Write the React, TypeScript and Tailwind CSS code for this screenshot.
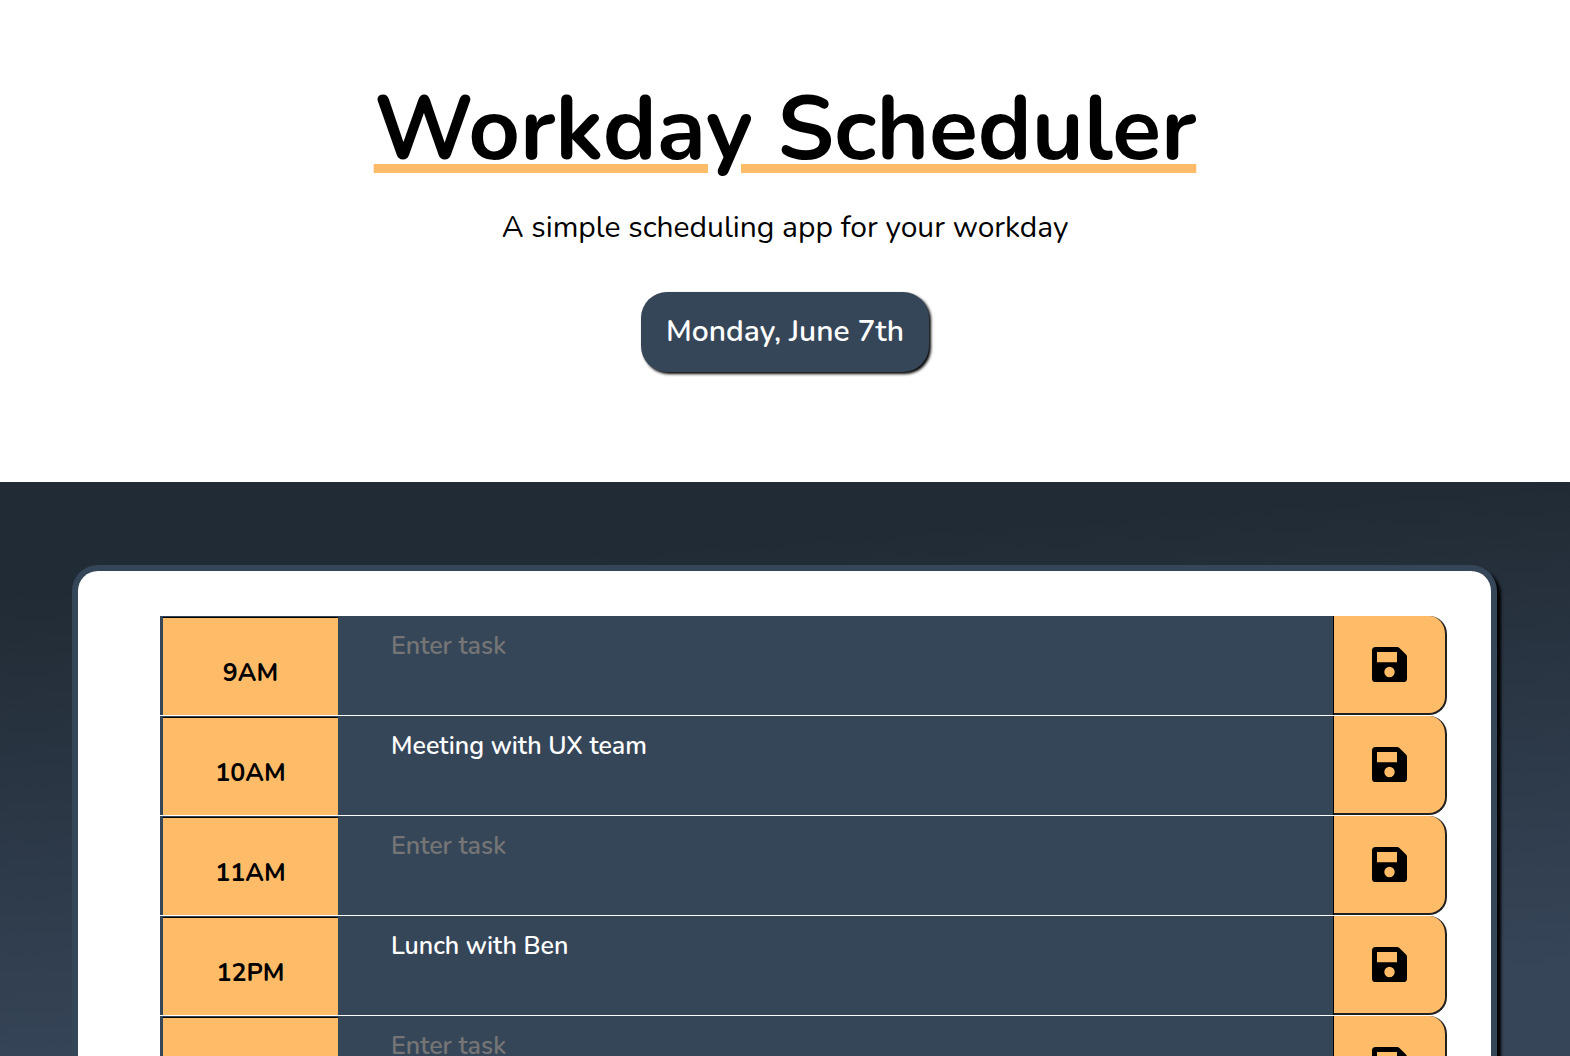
import React from "react";

type Slot = { hour: string; task: string };

const slots: Slot[] = [
  { hour: "9AM", task: "" },
  { hour: "10AM", task: "Meeting with UX team" },
  { hour: "11AM", task: "" },
  { hour: "12PM", task: "Lunch with Ben" },
  { hour: "1PM", task: "" },
];

function SaveIcon() {
  return (
    <svg viewBox="0 0 35 35" className="size-[35px]" fill="currentColor" aria-hidden="true">
      <path
        fillRule="evenodd"
        d="M3.6 0H25Q26.4 0 27.4 1L34 7.6Q35 8.6 35 10V31.4Q35 35 31.4 35H3.6Q0 35 0 31.4V3.6Q0 0 3.6 0ZM5 5V15.2H25V5ZM17.5 19.8a5.2 5.2 0 1 0 0 10.4a5.2 5.2 0 1 0 0-10.4Z"
      />
    </svg>
  );
}

function TimeBlock({ hour, task }: Slot) {
  return (
    <li className="flex h-[100px] border-b border-white bg-[#364659]">
      <div className="ml-[3px] mt-px flex w-[175px] shrink-0 items-center justify-center border-t border-black bg-[#febc68] pt-[14px] text-[25px] font-bold text-black">
        <label htmlFor={`task-${hour}`}>{hour}</label>
      </div>
      <textarea
        id={`task-${hour}`}
        defaultValue={task}
        placeholder="Enter task"
        className="block min-w-0 flex-1 resize-none bg-[#364659] px-[53px] py-3 text-[25px] leading-9 font-semibold text-white outline-none placeholder:text-[#757575]"
      />
      <div className="w-[114px] shrink-0 border-l border-black bg-white">
        <button
          type="button"
          aria-label={`Save ${hour}`}
          className="flex h-full w-full items-center justify-center rounded-r-[18px] border-r-2 border-b-2 border-[#212121] bg-[#febc68] text-black"
        >
          <SaveIcon />
        </button>
      </div>
    </li>
  );
}

export default function App() {
  return (
    <div className="h-screen overflow-hidden bg-white font-['Nunito','Open_Sans',sans-serif] text-black">
      <header className="flex flex-col items-center px-4 pt-[70px] pb-[110px] text-center">
        <h1 className="text-[90px] leading-[120px] font-bold underline decoration-[#febc68] decoration-[9px] underline-offset-[5px]">
          Workday Scheduler
        </h1>
        <p className="mt-[14px] text-[30px] leading-[48px] font-normal">A simple scheduling app for your workday</p>
        <p className="mt-10 rounded-[26px] bg-[#364659] px-[25px] py-4 text-[30px] leading-[48px] font-semibold text-white shadow-[2px_2px_3px_#000]">
          Monday, June 7th
        </p>
      </header>
      <main className="bg-linear-[176deg] from-[#212b35] from-15% to-[#364558] to-80% pr-[73px] pl-[72px] pt-[83px]">
        <div className="rounded-t-[26px] border-x-[6px] border-t-[6px] border-[#364659] bg-white pt-[45px] pr-[44px] pl-[82px] shadow-[4px_4px_3px_#000]">
          <ul>
            {slots.map((slot) => (
              <TimeBlock key={slot.hour} {...slot} />
            ))}
          </ul>
        </div>
      </main>
    </div>
  );
}
